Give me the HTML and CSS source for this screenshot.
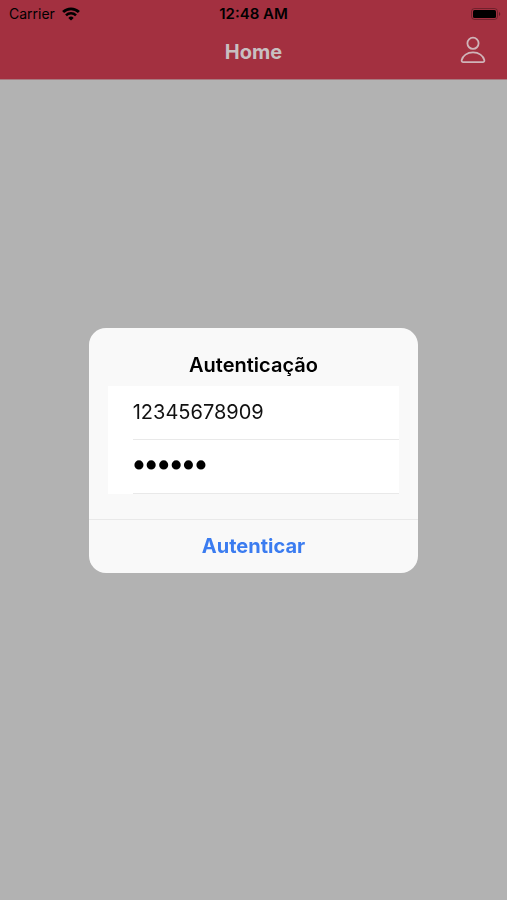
FILE: index.html
```html
<!DOCTYPE html>
<html lang="pt-BR">
<head>
  <meta charset="UTF-8">
  <meta name="viewport" content="width=device-width, initial-scale=1">
  <title>Home</title>
  <link rel="stylesheet" href="styles.css">
</head>
<body>

  <header class="header">
    <div class="status-bar">
      <div class="carrier">
        <span>Carrier</span>
        <svg class="wifi" viewBox="0 0 18 14" width="18" height="14">
          <path d="M1.1 5a11.3 11.3 0 0 1 15.8 0" fill="none" stroke="#000" stroke-width="2.8"/>
          <path d="M4 8.4a7 7 0 0 1 10 0" fill="none" stroke="#000" stroke-width="2.5"/>
          <path d="M9 13.6 6.3 10.9a3.9 3.9 0 0 1 5.4 0z"/>
        </svg>
      </div>
      <div class="time">12:48 AM</div>
      <svg class="battery" viewBox="0 0 32 14" width="32" height="14">
        <rect x="2.5" y="1.5" width="26" height="11" rx="3" fill="none" stroke="#000" stroke-opacity=".3"/>
        <rect x="4" y="3" width="23" height="8" rx="1.5"/>
        <path d="M30 5v4a2.2 2.2 0 0 0 0-4z" fill-opacity=".4"/>
      </svg>
    </div>
    <div class="nav-bar">
      <h1>Home</h1>
      <button class="profile" type="button" aria-label="Perfil">
        <svg viewBox="0 0 26 28" width="26" height="28" fill="none" stroke="currentColor" stroke-width="1.8">
          <circle cx="13" cy="7.3" r="5.6"/>
          <path d="M3.3 26.1h19.4c1.3 0 1.9-.9 1.6-2.1-1-4.2-5.4-7.6-11.3-7.6S2.7 19.8 1.7 24c-.3 1.2.3 2.1 1.6 2.1z"/>
        </svg>
      </button>
    </div>
  </header>

  <div class="overlay">
    <form class="modal" role="dialog" aria-labelledby="modalTitle">
      <h2 id="modalTitle">Autenticação</h2>
      <div class="fields">
        <input type="text" aria-label="CPF" value="12345678909">
        <input type="password" aria-label="Senha" value="123456">
      </div>
      <button class="submit" type="button">Autenticar</button>
    </form>
  </div>

</body>
</html>
```
FILE: styles.css
```css
* {
  box-sizing: border-box;
}

body {
  margin: 0;
  min-height: 100vh;
  font-family: Inter, "Liberation Sans", sans-serif;
  background: #b2b2b2;
  color: #000;
}

.header {
  background: #a33040;
  border-bottom: 1px solid #a87a80;
}

.status-bar {
  display: grid;
  grid-template-columns: 1fr auto 1fr;
  align-items: center;
  height: 27px;
  padding: 0 6px;
  font-size: 14px;
}

.carrier {
  display: flex;
  align-items: center;
  gap: 7px;
  padding-left: 3px;
}

.time {
  font-size: 15px;
  font-weight: 600;
}

.battery {
  justify-self: end;
}

.nav-bar {
  display: grid;
  grid-template-columns: 1fr auto 1fr;
  align-items: center;
  height: 52px;
  padding: 0 21px 2px;
  color: #c8bfc1;
}

.nav-bar h1 {
  grid-column: 2;
  margin: 0;
  font-size: 20px;
  font-weight: 700;
}

.profile {
  justify-self: end;
  display: flex;
  padding: 0 0 4px;
  border: 0;
  background: none;
  color: #d0b4b9;
}

.overlay {
  position: fixed;
  inset: 0;
  display: flex;
  align-items: center;
  justify-content: center;
}

.modal {
  width: 65%;
  overflow: hidden;
  border-radius: 17px;
  background: #f9f9f9;
}

.modal h2 {
  margin: 0;
  padding: 24px 16px 8px;
  font-size: 20px;
  font-weight: 600;
  line-height: 26px;
  text-align: center;
}

.fields {
  margin: 0 19px 25px;
  padding-left: 25px;
  background: #fff;
}

.fields input {
  display: block;
  width: 100%;
  height: 54px;
  padding: 0;
  border: 0;
  border-bottom: 1px solid #e9e9e9;
  border-radius: 0;
  outline: 0;
  background: none;
  font: 20px Inter, "Liberation Sans", sans-serif;
  color: #111;
}

/* bigger, rounder password dots */
.fields input[type="password"] {
  font: 21px "DejaVu Sans", sans-serif;
  color: #000;
  -webkit-text-stroke: 3px #000;
}

.submit {
  display: block;
  width: 100%;
  height: 54px;
  padding: 0;
  border: 0;
  border-top: 1px solid #e9e9e9;
  background: none;
  font: 700 20px Inter, "Liberation Sans", sans-serif;
  color: #3b7cf0;
}
```
